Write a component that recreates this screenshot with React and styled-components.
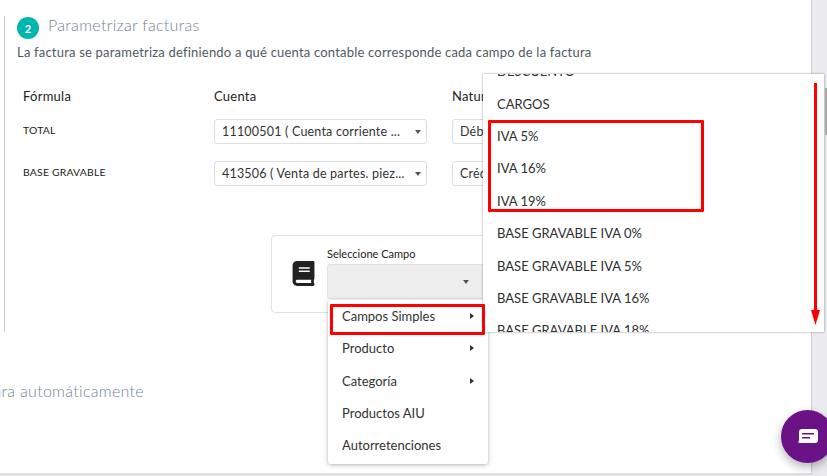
import React from "react";
import styled, { createGlobalStyle } from "styled-components";
import { FaBook } from "react-icons/fa";

const Global = createGlobalStyle`
  html, body { margin: 0; padding: 0; background: #ebebf0; overflow: hidden; }
  * { box-sizing: border-box; }
`;
const Page = styled.div`
  position: relative; width: 827px; height: 476px; overflow: hidden;
  background: #ebebf0; font-family: "Lato", sans-serif; color: #333;
`;
const Card = styled.main`
  width: 812px; height: 475px; background: #fff; padding-top: 16px;
  border-right: 1px solid #d0d0d4; border-bottom: 2px solid #dedede;
  overflow: hidden;
`;
const Step = styled.section`
  margin-left: 4px; height: 316px; padding-left: 12px;
  border-left: 1px solid #bccadb; display: flex; flex-direction: column;
`;
const StepHeader = styled.header`
  display: flex; align-items: center; gap: 9px; height: 22px; margin-top: 1px;
`;
const Badge = styled.span`
  width: 22px; height: 22px; border-radius: 50%; background: #00b5ad; color: #fff;
  display: flex; align-items: center; justify-content: center; font-size: 11px; font-weight: 700;
`;
const Title = styled.h2`
  margin: -7px 0 0; font-size: 16px; font-weight: 300; color: #73848f; line-height: 22px; letter-spacing: .3px;
`;
const Description = styled.p`
  margin: 5px 0 0; font-size: 13px; line-height: 16px; color: #4f5a64; letter-spacing: .2px; white-space: nowrap;
`;
const Grid = styled.div`
  display: grid; grid-template-columns: 191px 238px 1fr; margin: 28px 0 0 6px; align-items: center;
`;
const HeadCell = styled.div`
  font-size: 13px; font-weight: 400; line-height: 16px; height: 31px; color: #222; letter-spacing: .25px;
`;
const RowLabel = styled.div`
  font-size: 10.4px; height: 42px; padding-top: 4px; line-height: 14px; color: #222; letter-spacing: .2px;
`;
const SelectCell = styled.div`height: 42px;`;
const Select = styled.div`
  width: 213px; height: 25px; border: 1px solid #dcdee2; border-radius: 3px; background: #fff;
  display: flex; align-items: center; justify-content: space-between; padding: 0 5px 0 7px;
  font-size: 12.5px; color: #333; white-space: nowrap; overflow: hidden; letter-spacing: .2px;
`;
const Caret = styled.i`
  flex: none; width: 0; height: 0; border: 3.5px solid transparent; border-top: 4px solid #555; border-bottom: 0;
`;
const Field = styled.div`
  margin: 32px 0 0 254px; width: 300px; height: 78px; border: 1px solid #e2e2e2; border-radius: 4px;
  display: flex; padding: 13px 0 0 20px; gap: 12px;
`;
const BookIcon = styled(FaBook)`
  flex: none; width: 23px; height: 25px; color: #222; margin-top: 12px;
`;
const FieldBody = styled.div`position: relative; width: 200px;`;
const FieldLabel = styled.div`
  font-size: 11px; line-height: 12px; color: #222; height: 15px; margin-top: -1px; margin-bottom: 1px;
`;
const FieldSelect = styled.div`
  width: 200px; height: 35px; background: #eee; border: 1px solid #e2e2e2; border-radius: 3px;
  display: flex; align-items: center; padding-left: 135px;
`;
const Menu = styled.ul`
  position: absolute; left: 1px; top: 51px; width: 160px; height: 164px; margin: 0; padding: 0; list-style: none;
  background: #fff; border-radius: 3px; box-shadow: 0 1px 4px rgba(0,0,0,.3); z-index: 2;
`;
const MenuItem = styled.li`
  height: 32.3px; display: flex; align-items: center; justify-content: space-between;
  padding: 0 14px 0 14px; font-size: 13px; color: #333;
`;
const RightArrow = styled.i`
  width: 0; height: 0; border: 3.5px solid transparent; border-left: 4px solid #333; border-right: 0;
`;
const Next = styled.div`
  width: 144px; margin-top: 48px; display: flex; justify-content: flex-end; overflow: hidden;
  font-size: 16px; font-weight: 300; color: #73848f; white-space: nowrap; line-height: 22px; letter-spacing: .3px;
`;
const List = styled.ul`
  position: absolute; left: 483px; top: 74px; width: 341px; height: 258px; margin: 0; padding: 0; list-style: none;
  background: #fff; overflow: hidden; box-shadow: 0 0 2px rgba(0,0,0,.45); z-index: 3;
`;
const ListItem = styled.li`
  height: 32.4px; display: flex; align-items: center; padding-left: 14px; font-size: 13px; color: #2e2e2e;
  &:first-child { margin-top: -19px; }
`;
const Scrollbar = styled.div`
  position: absolute; left: 825px; top: 88px; width: 2px; height: 47px; background: #aaa; z-index: 3;
`;
const RedBox = styled.div`
  position: absolute; border: 3px solid #f00; border-radius: 1px; z-index: 4;
  left: ${p => p.$x}px; top: ${p => p.$y}px; width: ${p => p.$w}px; height: ${p => p.$h}px;
`;
const ArrowSvg = styled.svg`position: absolute; left: 810px; top: 83px; z-index: 4;`;
const Chat = styled.div`
  position: absolute; left: 781px; top: 410px; width: 53px; height: 53px; border-radius: 50%;
  background: #6b1386; box-shadow: 0 4px 10px rgba(0,0,0,.3); z-index: 5;
  display: flex; align-items: center; padding-left: 17px;
`;

const listItems = ["DESCUENTO","CARGOS","IVA 5%","IVA 16%","IVA 19%","BASE GRAVABLE IVA 0%","BASE GRAVABLE IVA 5%","BASE GRAVABLE IVA 16%","BASE GRAVABLE IVA 18%"];
const menuItems = [["Campos Simples",true],["Producto",true],["Categoría",true],["Productos AIU",false],["Autorretenciones",false]];

export default function App() {
  return (
    <Page>
      <Global />
      <Card>
        <Step>
          <StepHeader><Badge>2</Badge><Title>Parametrizar facturas</Title></StepHeader>
          <Description>La factura se parametriza definiendo a qué cuenta contable corresponde cada campo de la factura</Description>
          <Grid>
            <HeadCell>Fórmula</HeadCell><HeadCell>Cuenta</HeadCell><HeadCell>Naturaleza</HeadCell>
            <RowLabel>TOTAL</RowLabel>
            <SelectCell><Select>11100501 ( Cuenta corriente ...<Caret /></Select></SelectCell>
            <SelectCell><Select>Débito<Caret /></Select></SelectCell>
            <RowLabel>BASE GRAVABLE</RowLabel>
            <SelectCell><Select>413506 ( Venta de partes. piez...<Caret /></Select></SelectCell>
            <SelectCell><Select>Crédito<Caret /></Select></SelectCell>
          </Grid>
          <Field>
            <BookIcon />
            <FieldBody>
              <FieldLabel>Seleccione Campo</FieldLabel>
              <FieldSelect><Caret /></FieldSelect>
              <Menu>
                {menuItems.map(([t, a]) => <MenuItem key={t}>{t}{a && <RightArrow />}</MenuItem>)}
              </Menu>
            </FieldBody>
          </Field>
        </Step>
        <Next>factura automáticamente</Next>
      </Card>
      <List>{listItems.map(t => <ListItem key={t}>{t}</ListItem>)}</List>
      <Scrollbar />
      <RedBox $x={488} $y={120} $w={216} $h={92} />
      <RedBox $x={330} $y={304} $w={155} $h={31} />
      <ArrowSvg width="12" height="244" viewBox="0 0 12 244" aria-hidden="true">
        <rect x="4" y="0" width="3" height="230" fill="#f00" />
        <path d="M1 227h9l-4.500 15z" fill="#f00" />
      </ArrowSvg>
      <Chat>
        <svg width="20" height="15" viewBox="0 0 20 15" aria-hidden="true">
          <path fillRule="evenodd" fill="#fff" d="M4 0h13a3 3 0 0 1 3 3v8a3 3 0 0 1-3 3H2a2 2 0 0 1-2-1c1-1 1-2 1-3V3a3 3 0 0 1 3-3zM4 4v1.500h12V4zM4 8v1.500h8V8z" />
        </svg>
      </Chat>
    </Page>
  );
}
